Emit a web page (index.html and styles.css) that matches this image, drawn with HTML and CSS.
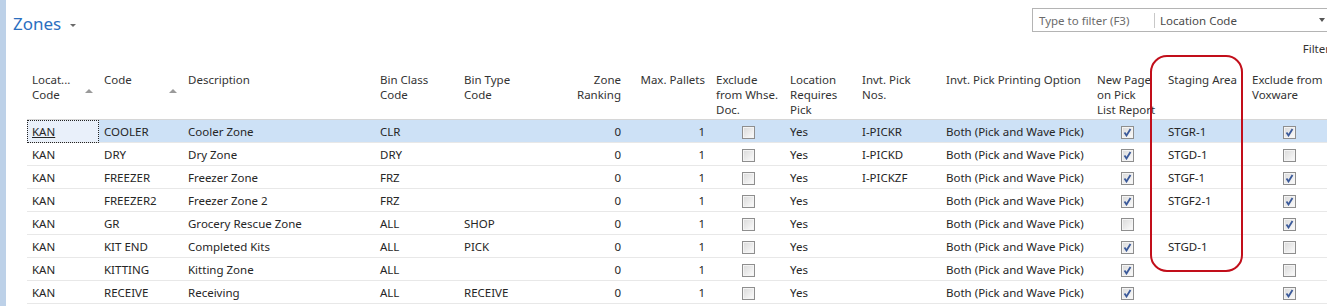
FILE: index.html
```html
<!DOCTYPE html>
<html lang="en">
<head>
    <meta charset="UTF-8">
    <title>Zones</title>
    <link rel="stylesheet" href="styles.css">
</head>
<body>
    <div class="page">
        <div class="strip"></div>
        <div class="content">
            <div class="toolbar">
                <h1 class="title">Zones <span class="caret"></span></h1>
                <div class="filter-area">
                    <div class="filter-box">
                        <span class="filter-input">Type to filter (F3)</span>
                        <span class="filter-field">Location Code</span>
                        <span class="filter-caret"></span>
                    </div>
                    <div class="filter-link">Filter</div>
                </div>
            </div>

            <table class="grid">
                <colgroup>
                    <col style="width:72px"><col style="width:84px"><col style="width:192px">
                    <col style="width:84px"><col style="width:84px"><col style="width:84px">
                    <col style="width:84px"><col style="width:74px"><col style="width:72px">
                    <col style="width:84px"><col style="width:151px"><col style="width:71px">
                    <col style="width:84px"><col style="width:84px">
                </colgroup>
                <thead>
                    <tr>
                        <th class="sorted">Locat...<br>Code<span class="sort"></span></th>
                        <th class="sorted">Code<span class="sort"></span></th>
                        <th>Description</th>
                        <th>Bin Class<br>Code</th>
                        <th>Bin Type<br>Code</th>
                        <th class="num">Zone<br>Ranking</th>
                        <th class="num">Max. Pallets</th>
                        <th>Exclude<br>from Whse.<br>Doc.</th>
                        <th>Location<br>Requires<br>Pick</th>
                        <th>Invt. Pick<br>Nos.</th>
                        <th>Invt. Pick Printing Option</th>
                        <th>New Page<br>on Pick<br>List Report</th>
                        <th>Staging Area</th>
                        <th>Exclude from<br>Voxware</th>
                    </tr>
                </thead>
                <tbody id="rows"></tbody>
            </table>

            <div class="highlight"></div>
        </div>
    </div>

    <script>
        var zones = [
            ['COOLER', 'Cooler Zone', 'CLR', '', 'I-PICKR', true, 'STGR-1', true],
            ['DRY', 'Dry Zone', 'DRY', '', 'I-PICKD', true, 'STGD-1', false],
            ['FREEZER', 'Freezer Zone', 'FRZ', '', 'I-PICKZF', true, 'STGF-1', true],
            ['FREEZER2', 'Freezer Zone 2', 'FRZ', '', '', true, 'STGF2-1', true],
            ['GR', 'Grocery Rescue Zone', 'ALL', 'SHOP', '', false, '', true],
            ['KIT END', 'Completed Kits', 'ALL', 'PICK', '', true, 'STGD-1', false],
            ['KITTING', 'Kitting Zone', 'ALL', '', '', true, '', false],
            ['RECEIVE', 'Receiving', 'ALL', 'RECEIVE', '', true, '', true]
        ];

        function box(checked) {
            var mark = checked
                ? '<svg width="9" height="9" viewBox="0 0 9 9"><path d="M1.5 4.5 L3.5 7.5 L7.5 1" fill="none" stroke="#3b5a9a" stroke-width="1.8"/></svg>'
                : '';
            return '<span class="check' + (checked ? ' on' : '') + '">' + mark + '</span>';
        }

        var html = '';
        zones.forEach(function (z, i) {
            html += '<tr' + (i === 0 ? ' class="selected"' : '') + '>' +
                '<td' + (i === 0 ? ' class="focus"><u>KAN</u>' : '>KAN') + '</td>' +
                '<td>' + z[0] + '</td>' +
                '<td>' + z[1] + '</td>' +
                '<td>' + z[2] + '</td>' +
                '<td>' + z[3] + '</td>' +
                '<td class="num">0</td>' +
                '<td class="num">1</td>' +
                '<td class="box">' + box(false) + '</td>' +
                '<td>Yes</td>' +
                '<td>' + z[4] + '</td>' +
                '<td>Both (Pick and Wave Pick)</td>' +
                '<td class="box">' + box(z[5]) + '</td>' +
                '<td>' + z[6] + '</td>' +
                '<td class="box">' + box(z[7]) + '</td>' +
                '</tr>';
        });
        document.getElementById('rows').innerHTML = html;
    </script>
</body>
</html>
```

FILE: styles.css
```css
body { margin: 0; font-family: "Noto Sans", "Open Sans", sans-serif; font-size: 11.5px; color: #262626; background: #fff; overflow: hidden; }
.page { display: flex; height: 306px; }
.strip { width: 6px; background: #bdd1e8; flex: none; }
.content { flex: 1; position: relative; min-width: 0; }

.toolbar { display: flex; justify-content: space-between; height: 69px; }
.title {
    margin: 12px 0 0 7px;
    font-size: 17px;
    font-weight: 400;
    color: #2b6fbf;
    line-height: 24px;
}
.caret {
    display: inline-block;
    width: 0; height: 0;
    border-left: 3px solid transparent;
    border-right: 3px solid transparent;
    border-top: 3px solid #6a6a6a;
    vertical-align: middle;
    margin-left: 4px;
}
.filter-area { width: 295px; padding-top: 8px; }
.filter-box {
    display: flex;
    align-items: center;
    height: 22px;
    border: 1px solid #b4b4b4;
    border-right: none;
    color: #6b6b6b;
}
.filter-input { width: 115px; padding-left: 6px; border-right: 1px solid #c8c8c8; line-height: 15px; }
.filter-field { flex: 1; padding-left: 5px; color: #4a4a4a; }
.filter-caret {
    width: 0; height: 0;
    border-left: 3px solid transparent;
    border-right: 3px solid transparent;
    border-top: 4px solid #555;
    margin-right: 2px;
}
.filter-link { text-align: right; margin-top: 9px; margin-right: -3px; color: #333; }

.grid { border-collapse: collapse; table-layout: fixed; margin-left: 21px; width: 1304px; }
.grid th {
    font-weight: 400;
    text-align: left;
    vertical-align: top;
    line-height: 15px;
    padding: 3px 5px 0;
    height: 47px;
    color: #333;
    border-bottom: 1px solid #d6d6d6;
    position: relative;
    white-space: nowrap;
}
.grid th.num, .grid td.num { text-align: right; padding-right: 6px; }
.sort {
    position: absolute;
    right: 6px;
    top: 20px;
    width: 0; height: 0;
    border-left: 4px solid transparent;
    border-right: 4px solid transparent;
    border-bottom: 4px solid #9a9a9a;
}
.grid td {
    height: 22px;
    padding: 0 5px;
    border-bottom: 1px solid #e8e8e8;
    white-space: nowrap;
    overflow: hidden;
}
.grid td.box { text-align: center; padding: 0; }
.selected td { background: #cde1f6; }
.selected td.focus { background: #e9f0fa; outline: 1px dotted #222; outline-offset: -1px; }

.check {
    display: inline-block;
    width: 11px; height: 11px;
    border: 1px solid #8e8e8e;
    background: linear-gradient(135deg, #d9d9d9, #fcfcfc);
    box-shadow: inset 0 0 0 1px #f4f4f4;
    vertical-align: middle;
    position: relative;
}
.check svg { position: absolute; left: 1px; top: 1px; }

.highlight {
    position: absolute;
    left: 1144px;
    top: 55px;
    width: 89px;
    height: 213px;
    border: 2px solid #c20e1a;
    border-radius: 17px;
}
```
